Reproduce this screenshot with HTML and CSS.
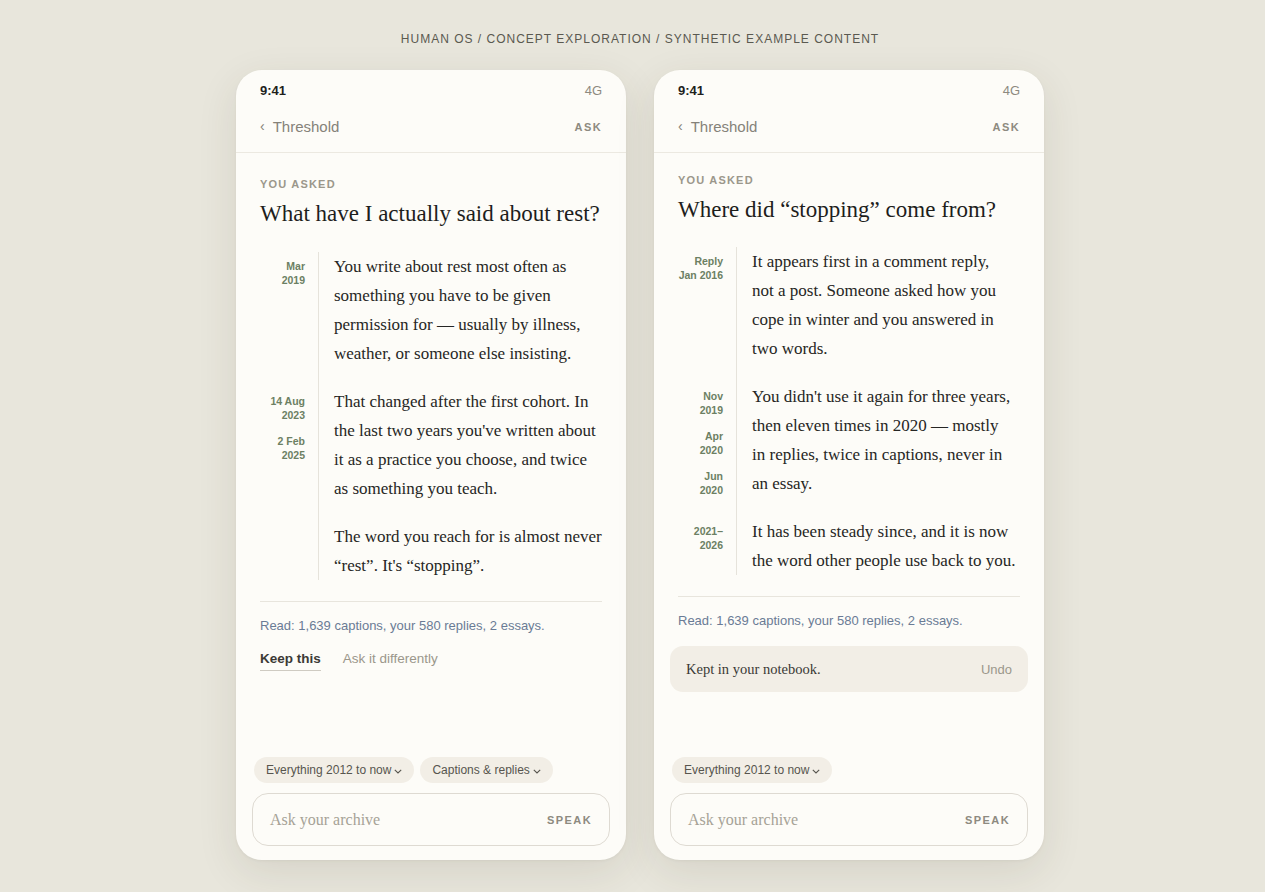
FILE: index.html
```html
<!DOCTYPE html>
<html lang="en">
<head>
<meta charset="utf-8">
<title>Threshold</title>
<link rel="stylesheet" href="styles.css">
</head>
<body>
<div class="page">
  <div class="caption">HUMAN OS / CONCEPT EXPLORATION / SYNTHETIC EXAMPLE CONTENT</div>
  <div class="phones">
    <section class="phone">
      <div class="status"><span class="time">9:41</span><span class="net">4G</span></div>
      <div class="nav"><span class="back"><span class="chev">‹</span>Threshold</span><span class="ask">ASK</span></div>
      <div class="content">
        <div class="eyebrow">YOU ASKED</div>
        <h1 class="question">What have I actually said about rest?</h1>
        <div class="timeline">
          <div class="entry">
            <div class="dates"><div class="date">Mar<br>2019</div></div>
            <p class="text">You write about rest most often as something you have to be given permission for — usually by illness, weather, or someone else insisting.</p>
          </div>
          <div class="entry">
            <div class="dates"><div class="date">14 Aug<br>2023</div><div class="date">2 Feb<br>2025</div></div>
            <p class="text">That changed after the first cohort. In the last two years you've written about it as a practice you choose, and twice as something you teach.</p>
          </div>
          <div class="entry last">
            <div class="dates"></div>
            <p class="text">The word you reach for is almost never “rest”. It's “stopping”.</p>
          </div>
        </div>
        <div class="divider"></div>
        <div class="read">Read: 1,639 captions, your 580 replies, 2 essays.</div>
        <div class="actions"><span class="keep">Keep this</span><span class="differently">Ask it differently</span></div>
      </div>
      <div class="bottom">
        <div class="chips">
          <span class="chip">Everything 2012 to now<svg class="cv" viewBox="0 0 8 5" width="8" height="5"><path d="M0.8 0.8 L4 4 L7.2 0.8" fill="none" stroke="currentColor" stroke-width="1.1"/></svg></span>
          <span class="chip">Captions &amp; replies<svg class="cv" viewBox="0 0 8 5" width="8" height="5"><path d="M0.8 0.8 L4 4 L7.2 0.8" fill="none" stroke="currentColor" stroke-width="1.1"/></svg></span>
        </div>
        <div class="input"><span class="placeholder">Ask your archive</span><span class="speak">SPEAK</span></div>
      </div>
    </section>

    <section class="phone">
      <div class="status"><span class="time">9:41</span><span class="net">4G</span></div>
      <div class="nav"><span class="back"><span class="chev">‹</span>Threshold</span><span class="ask">ASK</span></div>
      <div class="content tight">
        <div class="eyebrow">YOU ASKED</div>
        <h1 class="question">Where did “stopping” come from?</h1>
        <div class="timeline">
          <div class="entry">
            <div class="dates"><div class="date">Reply<br>Jan 2016</div></div>
            <p class="text">It appears first in a comment reply, not a post. Someone asked how you cope in winter and you answered in two words.</p>
          </div>
          <div class="entry">
            <div class="dates"><div class="date">Nov<br>2019</div><div class="date">Apr<br>2020</div><div class="date">Jun<br>2020</div></div>
            <p class="text">You didn't use it again for three years, then eleven times in 2020 — mostly in replies, twice in captions, never in an essay.</p>
          </div>
          <div class="entry last">
            <div class="dates"><div class="date">2021–<br>2026</div></div>
            <p class="text">It has been steady since, and it is now the word other people use back to you.</p>
          </div>
        </div>
        <div class="divider"></div>
        <div class="read">Read: 1,639 captions, your 580 replies, 2 essays.</div>
        <div class="kept"><span class="kept-text">Kept in your notebook.</span><span class="undo">Undo</span></div>
      </div>
      <div class="bottom">
        <div class="chips">
          <span class="chip">Everything 2012 to now<svg class="cv" viewBox="0 0 8 5" width="8" height="5"><path d="M0.8 0.8 L4 4 L7.2 0.8" fill="none" stroke="currentColor" stroke-width="1.1"/></svg></span>
        </div>
        <div class="input"><span class="placeholder">Ask your archive</span><span class="speak">SPEAK</span></div>
      </div>
    </section>
  </div>
</div>
</body>
</html>
```
FILE: styles.css
```css
* { box-sizing: border-box; }
html, body { margin: 0; padding: 0; }
html { background: #e8e6dc; }
body {
  background: #e8e6dc;
  font-family: "Liberation Sans", Arial, sans-serif;
  color: #2a2a28;
  min-height: 892px;
}
.page {
  padding: 0 0 32px 15px;
  display: flex;
  flex-direction: column;
  align-items: center;
}
.caption {
  margin-top: 32px;
  height: 15px;
  line-height: 15px;
  font-size: 12px;
  letter-spacing: 1px;
  color: #5a5950;
}
.phones {
  margin-top: 23px;
  display: flex;
  gap: 28px;
}
.phone {
  width: 390px;
  height: 790px;
  background: #fdfcf8;
  border-radius: 26px;
  box-shadow: 0 12px 40px rgba(60, 55, 40, 0.11), 0 1px 3px rgba(60, 55, 40, 0.05);
  display: flex;
  flex-direction: column;
  overflow: hidden;
}
.status {
  height: 40px;
  padding: 0 24px;
  display: flex;
  align-items: center;
  justify-content: space-between;
  font-size: 13px;
}
.time { font-weight: bold; color: #1f1f1d; }
.net { color: #8d8a80; }
.nav {
  padding: 7px 24px 15px;
  display: flex;
  align-items: center;
  justify-content: space-between;
  border-bottom: 1px solid #ece9e1;
  line-height: 20px;
}
.back { font-size: 15px; color: #858279; }
.chev { font-size: 14px; margin: 0 8px 0 0; position: relative; top: -1px; }
.ask { font-size: 11px; font-weight: bold; letter-spacing: 1.4px; color: #8d8a80; }
.content { padding: 24px 24px 0; }
.content.tight { padding-top: 20px; }
.eyebrow {
  font-size: 11px;
  line-height: 14px;
  font-weight: bold;
  letter-spacing: 1.2px;
  color: #9b978b;
}
.question {
  margin: 8px 0 0;
  font-family: "Liberation Serif", "Times New Roman", serif;
  font-weight: normal;
  font-size: 23px;
  line-height: 30px;
  color: #1e1e1c;
}
.timeline { margin-top: 23px; }
.content.tight .timeline { margin-top: 22px; }
.entry {
  display: grid;
  grid-template-columns: 45px 1fr;
  column-gap: 13px;
}
.dates { padding-top: 7px; text-align: right; }
.date {
  font-size: 10.5px;
  line-height: 14px;
  font-weight: bold;
  color: #6c8063;
  white-space: nowrap;
}
.date + .date { margin-top: 12px; }
.text {
  margin: 0;
  border-left: 1px solid #e6e3db;
  padding: 0 0 19px 15px;
  font-family: "Liberation Serif", "Times New Roman", serif;
  font-size: 17px;
  line-height: 29px;
  color: #262624;
  text-wrap: pretty;
}
.entry.last .text { padding-bottom: 0; }
.divider { margin-top: 21px; height: 1px; background: #e8e5dd; }
.read {
  margin-top: 15px;
  font-size: 13px;
  line-height: 18px;
  color: #6a7b95;
}
.actions {
  margin-top: 15px;
  display: flex;
  gap: 22px;
  font-size: 13.5px;
  line-height: 18px;
}
.keep {
  font-weight: bold;
  color: #3c3a35;
  padding-bottom: 2px;
  border-bottom: 1px solid #cfcbc2;
}
.differently { color: #9b978b; }
.kept {
  margin: 16px -8px 0;
  height: 46px;
  padding: 0 16px;
  border-radius: 13px;
  background: #f2eee6;
  display: flex;
  align-items: center;
  justify-content: space-between;
}
.kept-text {
  font-family: "Liberation Serif", "Times New Roman", serif;
  font-size: 14.5px;
  color: #3a3935;
}
.undo { font-size: 13px; color: #9b978b; }
.bottom {
  margin-top: auto;
  padding: 0 16px 14px;
}
.chips { display: flex; gap: 6px; padding-left: 2px; }
.chip {
  height: 26px;
  padding: 0 12px;
  border-radius: 13px;
  background: #f2eee6;
  display: flex;
  align-items: center;
  font-size: 12px;
  color: #57554e;
}
.cv { margin-left: 3px; margin-top: 3px; color: #57554e; }
.input {
  margin-top: 10px;
  height: 53px;
  border: 1px solid #dedad2;
  border-radius: 16px;
  padding: 0 17px;
  display: flex;
  align-items: center;
  justify-content: space-between;
  background: #fdfcf8;
}
.placeholder {
  font-family: "Liberation Serif", "Times New Roman", serif;
  font-size: 16px;
  color: #a6a296;
}
.speak { font-size: 11px; font-weight: bold; letter-spacing: 1.4px; color: #8d8a80; }
```
